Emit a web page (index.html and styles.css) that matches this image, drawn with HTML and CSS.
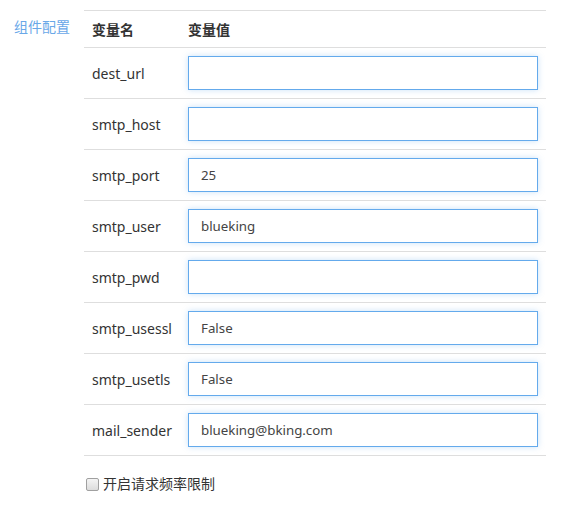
FILE: index.html
```html
<!DOCTYPE html>
<html>
<head>
<meta charset="utf-8">
<link rel="stylesheet" href="styles.css">
</head>
<body>
<div class="form">
  <div class="form-row">
    <div class="form-label">组件配置</div>
    <div class="form-content">
      <table class="var-table">
        <thead>
          <tr><th class="col-name">变量名</th><th>变量值</th></tr>
        </thead>
        <tbody>
          <tr><td class="col-name">dest_url</td><td><input class="var-input" type="text" value=""></td></tr>
          <tr><td class="col-name">smtp_host</td><td><input class="var-input" type="text" value=""></td></tr>
          <tr><td class="col-name">smtp_port</td><td><input class="var-input" type="text" value="25"></td></tr>
          <tr><td class="col-name">smtp_user</td><td><input class="var-input" type="text" value="blueking"></td></tr>
          <tr><td class="col-name">smtp_pwd</td><td><input class="var-input" type="text" value=""></td></tr>
          <tr><td class="col-name">smtp_usessl</td><td><input class="var-input" type="text" value="False"></td></tr>
          <tr><td class="col-name">smtp_usetls</td><td><input class="var-input" type="text" value="False"></td></tr>
          <tr><td class="col-name">mail_sender</td><td><input class="var-input" type="text" value="blueking@bking.com"></td></tr>
        </tbody>
      </table>
      <label class="check-row"><span class="checkbox"></span><span class="check-text">开启请求频率限制</span></label>
    </div>
  </div>
</div>
</body>
</html>
```

FILE: styles.css
```css
* { box-sizing: border-box; }
html, body { margin: 0; padding: 0; background: #fff; }
body {
  font-family: "Noto Sans", "Noto Sans CJK SC", sans-serif;
  color: #333;
  font-size: 14px;
}
.form { padding-top: 10px; }
.form-row { display: flex; }
.form-label {
  width: 84px;
  padding-left: 14px;
  padding-top: 7px;
  font-size: 14px;
  line-height: 20px;
  color: #6aa8e8;
}
.form-content { width: 462px; }
.var-table {
  width: 462px;
  border-collapse: collapse;
  border-top: 1px solid #dedede;
}
.var-table th {
  text-align: left;
  font-weight: bold;
  font-size: 14px;
  color: #333;
  height: 37px;
  padding: 0 8px 1px;
  border-bottom: 1px solid #dedede;
}
.var-table td {
  height: 51px;
  padding: 0 8px;
  border-bottom: 1px solid #dedede;
  font-size: 14px;
  color: #333;
}
.col-name { width: 96px; }
.var-input {
  display: block;
  width: 350px;
  height: 34px;
  border: 1px solid #64aaec;
  box-shadow: 0 0 6px rgba(100, 170, 236, 0.35);
  padding: 0 12px;
  font-family: "Noto Sans", "Noto Sans CJK SC", sans-serif;
  font-size: 13.3px;
  color: #444;
  outline: none;
  margin: 0;
}
.check-row {
  display: flex;
  align-items: center;
  margin-top: 18px;
  margin-left: 2px;
}
.checkbox {
  width: 13px;
  height: 13px;
  border: 1px solid #a0a0a0;
  border-radius: 2px;
  background: linear-gradient(#f4f4f4, #dcdcdc);
  margin-right: 4px;
}
.check-text { font-size: 14px; color: #333; line-height: 20px; }
```
